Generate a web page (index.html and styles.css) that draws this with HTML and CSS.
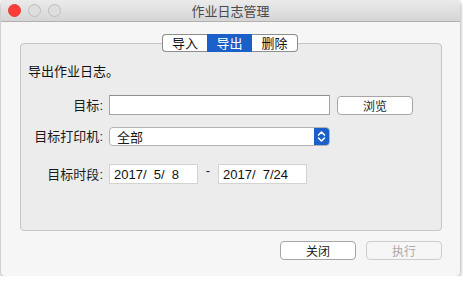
FILE: index.html
```html
<!DOCTYPE html>
<html>
<head>
    <title>作业日志管理</title>
    <link rel="stylesheet" href="styles.css">
</head>
<body>
    <div class="window">
        <div class="titlebar">
            <div class="lights">
                <span class="light red"></span>
                <span class="light"></span>
                <span class="light"></span>
            </div>
            <div class="title">作业日志管理</div>
            <div></div>
        </div>

        <div class="content">
            <div class="tabs">
                <div class="tab">导入</div>
                <div class="tab active">导出</div>
                <div class="tab">删除</div>
            </div>
            <div class="box">
                <div class="intro">导出作业日志。</div>
                <div class="form">
                    <div class="label">目标<span class="colon">:</span></div>
                    <div class="field-row">
                        <div class="input"></div>
                        <div class="btn browse">浏览</div>
                    </div>

                    <div class="label">目标打印机<span class="colon">:</span></div>
                    <div class="select">
                        <span class="select-text">全部</span>
                        <span class="arrows">
                            <svg width="9" height="13" viewBox="0 0 9 13">
                                <path d="M1.5 5 L4.5 2 L7.5 5 M1.5 8 L4.5 11 L7.5 8" fill="none" stroke="#fff" stroke-width="1.6" stroke-linecap="round" stroke-linejoin="round"/>
                            </svg>
                        </span>
                    </div>

                    <div class="label">目标时段<span class="colon">:</span></div>
                    <div class="field-row dates">
                        <div class="date">2017/&nbsp; 5/&nbsp; 8</div>
                        <div class="dash">-</div>
                        <div class="date">2017/&nbsp; 7/24</div>
                    </div>
                </div>
            </div>
            <div class="actions">
                <div class="btn">关闭</div>
                <div class="btn disabled">执行</div>
            </div>
        </div>
    </div>
</body>
</html>
```

FILE: styles.css
```css
body {
    margin: 0;
    background: #ffffff;
    font-family: "Noto Sans CJK SC", "Liberation Sans", sans-serif;
    font-size: 13px;
    color: #1a1a1a;
}
.window {
    width: 459px;
    height: 276px;
    margin-left: 1px;
    background: #f6f6f6;
    border-radius: 5px 5px 4px 4px;
    box-shadow: 0 1px 4px rgba(0, 0, 0, 0.45);
    overflow: hidden;
}
.titlebar {
    height: 21px;
    display: grid;
    grid-template-columns: 1fr auto 1fr;
    align-items: center;
    background: linear-gradient(#ebebeb, #d5d5d5);
    border-bottom: 1px solid #b1b1b1;
}
.lights {
    display: flex;
    gap: 7px;
    padding-left: 7px;
}
.light {
    width: 11px;
    height: 11px;
    border-radius: 50%;
    border: 0.5px solid #bdbdbd;
    background: #dedede;
}
.light.red {
    background: #fc3d39;
    border-color: #e33e32;
}
.title {
    color: #4a4a4a;
    font-size: 13px;
    line-height: 21px;
}
.content {
    padding: 12px 18px 0 19px;
}
.tabs {
    display: flex;
    justify-content: center;
    position: relative;
    z-index: 1;
    margin-bottom: -9px;
    padding-right: 2px;
}
.tab {
    width: 44px;
    height: 16px;
    line-height: 16px;
    text-align: center;
    background: #fff;
    border-top: 1px solid #8d8d8d;
    border-bottom: 1px solid #8d8d8d;
    font-size: 13px;
    color: #111;
}
.tab:first-child {
    border-left: 1px solid #8d8d8d;
    border-radius: 4px 0 0 4px;
}
.tab:last-child {
    border-right: 1px solid #8d8d8d;
    border-radius: 0 4px 4px 0;
    width: 45px;
}
.tab.active {
    background: #1b5fc9;
    border-color: #1b5fc9;
    color: #fff;
    width: 45px;
}
.box {
    height: 186px;
    border: 1px solid #c6c6c6;
    border-radius: 4px;
    background: #ececec;
}
.intro {
    padding: 19px 0 0 7px;
    line-height: 16px;
    color: #111;
}
.form {
    display: grid;
    grid-template-columns: 82px auto;
    column-gap: 6px;
    align-items: center;
    margin-top: 16px;
}
.label {
    text-align: right;
    line-height: 16px;
}
.colon {
    font-family: "Liberation Sans", sans-serif;
}
.field-row {
    display: flex;
    align-items: center;
    gap: 7px;
}
.input {
    width: 219px;
    height: 18px;
    background: #fff;
    border: 1px solid #a4a4a4;
    border-top-color: #8e8e8e;
}
.btn {
    width: 74px;
    height: 17px;
    line-height: 17px;
    text-align: center;
    background: #fff;
    border: 1px solid #a6a6a6;
    border-radius: 4px;
    font-size: 12px;
    color: #1a1a1a;
}
.select {
    margin-top: 12px;
    width: 219px;
    height: 17px;
    display: flex;
    justify-content: space-between;
    align-items: center;
    background: #fff;
    border: 1px solid #b2b2b2;
    border-radius: 4px;
    overflow: hidden;
}
.form .label:nth-child(3) {
    margin-top: 12px;
}
.select-text {
    padding-left: 7px;
    line-height: 17px;
}
.arrows {
    width: 15px;
    height: 19px;
    background: #1b5fc9;
    display: flex;
    justify-content: center;
    align-items: center;
}
.dates {
    margin-top: 18px;
    gap: 0;
}
.form .label:nth-child(5) {
    margin-top: 18px;
}
.date {
    width: 83px;
    height: 18px;
    line-height: 19px;
    padding-left: 4px;
    background: #fff;
    border: 1px solid #d3d3d3;
    font-family: "Liberation Sans", sans-serif;
    font-size: 13px;
    color: #111;
}
.dash {
    width: 20px;
    text-align: center;
    font-family: "Liberation Sans", sans-serif;
    line-height: 10px;
    margin-top: -6px;
}
.actions {
    display: flex;
    justify-content: flex-end;
    gap: 10px;
    margin-top: 10px;
}
.btn.disabled {
    background: #f6f6f6;
    border-color: #cdcdcd;
    color: #a9a9a9;
}
```
